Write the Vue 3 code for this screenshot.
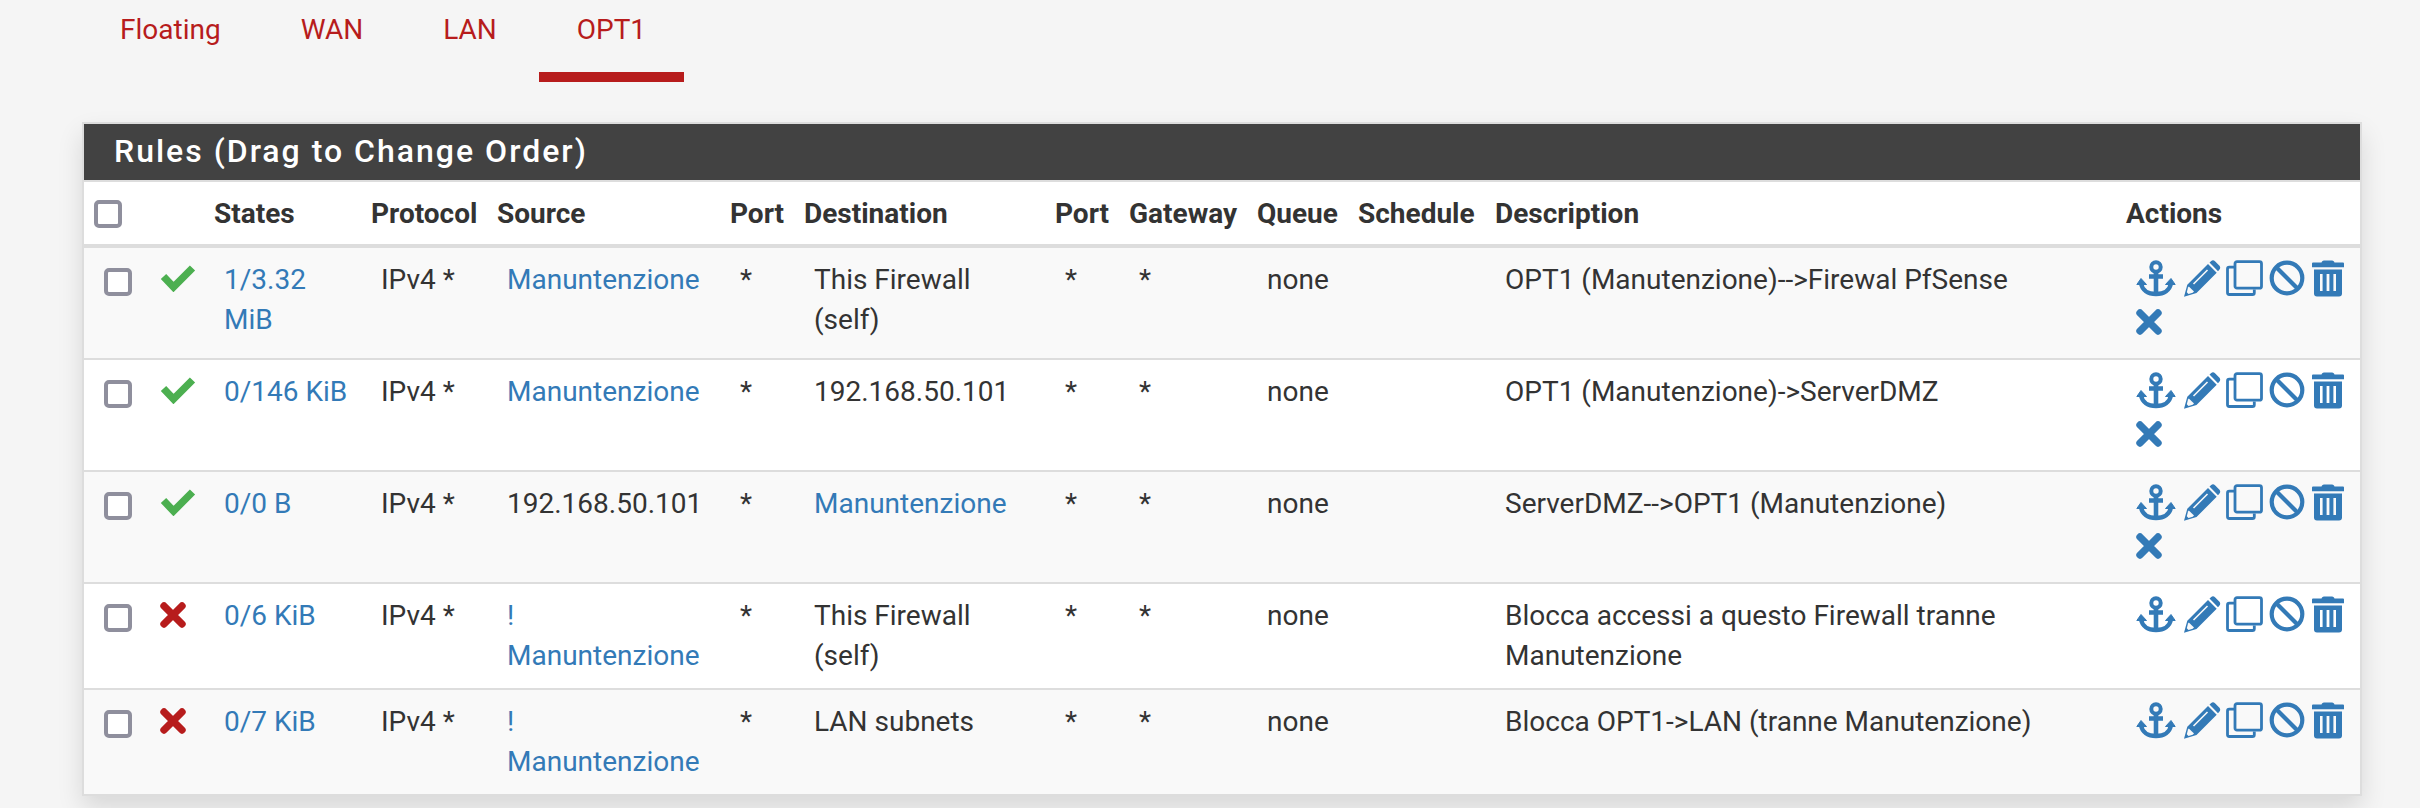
<script setup>
const tabs = ['Floating', 'WAN', 'LAN', 'OPT1']
const headers = ['States', 'Protocol', 'Source', 'Port', 'Destination', 'Port', 'Gateway', 'Queue', 'Schedule', 'Description', 'Actions']
const rules = [
  { pass: true, states: '1/3.32 MiB', source: 'Manuntenzione', sourceLink: true, dest: 'This Firewall (self)', desc: 'OPT1 (Manutenzione)-->Firewal PfSense', separate: true },
  { pass: true, states: '0/146 KiB', source: 'Manuntenzione', sourceLink: true, dest: '192.168.50.101', desc: 'OPT1 (Manutenzione)->ServerDMZ', separate: true },
  { pass: true, states: '0/0 B', source: '192.168.50.101', dest: 'Manuntenzione', destLink: true, desc: 'ServerDMZ-->OPT1 (Manutenzione)', separate: true },
  { pass: false, states: '0/6 KiB', source: '! Manuntenzione', sourceLink: true, dest: 'This Firewall (self)', desc: 'Blocca accessi a questo Firewall tranne Manutenzione' },
  { pass: false, states: '0/7 KiB', source: '! Manuntenzione', sourceLink: true, dest: 'LAN subnets', desc: 'Blocca OPT1->LAN (tranne Manutenzione)' },
]
</script>

<template>
  <main class="page">
    <nav class="tabs">
      <a v-for="t in tabs" :key="t" class="tab" :class="{ active: t === 'OPT1' }">{{ t }}</a>
    </nav>
    <section class="panel">
      <h2 class="title">Rules (Drag to Change Order)</h2>
      <table>
        <colgroup>
          <col class="c-box" /><col class="c-icon" /><col class="c-states" /><col class="c-proto" /><col class="c-source" />
          <col class="c-port" /><col class="c-dest" /><col class="c-port2" /><col class="c-gw" /><col class="c-queue" />
          <col class="c-sched" /><col class="c-desc" /><col class="c-act" />
        </colgroup>
        <thead>
          <tr>
            <th><span class="box"></span></th>
            <th></th>
            <th v-for="(h, i) in headers" :key="i">{{ h }}</th>
          </tr>
        </thead>
        <tbody>
          <tr v-for="(r, i) in rules" :key="i" :class="{ tall: r.separate }">
            <td><span class="box"></span></td>
            <td class="status">
              <svg v-if="r.pass" class="check" width="36" height="28" viewBox="0 0 36 28"><path d="M3.500 12.500 13.500 23 32.500 4" fill="none" stroke="#4caf50" stroke-width="7.4" stroke-linejoin="miter" stroke-linecap="butt" /></svg>
              <svg v-else class="cross" width="26" height="26" viewBox="0 0 26 26"><path d="M4 4 22 22M22 4 4 22" stroke="#b71c1c" stroke-width="7.4" stroke-linecap="round" /></svg>
            </td>
            <td><a>{{ r.states }}</a></td>
            <td>IPv4 *</td>
            <td><a v-if="r.sourceLink">{{ r.source }}</a><template v-else>{{ r.source }}</template></td>
            <td>*</td>
            <td><a v-if="r.destLink">{{ r.dest }}</a><template v-else>{{ r.dest }}</template></td>
            <td>*</td>
            <td>*</td>
            <td>none</td>
            <td></td>
            <td>{{ r.desc }}</td>
            <td class="actions-cell">
              <div class="actions">
                <svg class="anchor" width="40" height="38" viewBox="0 0 40 38">
                  <g fill="none" stroke="#337ab7" stroke-width="4">
                    <circle cx="20" cy="7" r="4.7" />
                    <path d="M20 11V34M13 16.500H27" stroke-width="4.6" />
                    <path d="M5 23C6 30 12 34 20 34S34 30 35 23" stroke-width="4.4" />
                  </g>
                  <path d="M.8 24.500 5 18.500 10.500 24.500ZM29.500 24.500 35 18.500 39.200 24.500Z" fill="#337ab7" stroke="#337ab7" stroke-linejoin="round" />
                </svg>
                <svg class="pencil" width="38" height="38" viewBox="0 0 38 38">
                  <path fill="#337ab7" d="M26.500 2.500 28 1.200Q30-.5 32 1.200L36.500 5.800Q38 7.700 36.300 9.800L35 11.300ZM25 4 33.700 12.800 13.500 33 1 36.800 4.300 24.700Z" />
                  <path d="M10.500 24 24.500 10" stroke="#f9f9f9" stroke-width="1.6" />
                  <path d="M5.800 26.500 11 31.500 9.700 32.800 5.500 34 3.800 32.200 5 27.500Z" fill="#f9f9f9" />
                </svg>
                <svg class="clone" width="37" height="36" viewBox="0 0 37 36">
                  <g fill="none" stroke="#337ab7" stroke-width="2.8">
                    <rect x="9" y="1.700" width="26.500" height="26.500" rx="2" />
                    <path d="M8 7.200H3.300Q1.500 7.200 1.500 9V32.500Q1.500 34.500 3.300 34.500H26.500Q28.300 34.500 28.300 32.700V29.500" />
                  </g>
                </svg>
                <svg class="ban" width="36" height="36" viewBox="0 0 36 36"><g fill="none" stroke="#337ab7" stroke-width="4.2"><circle cx="18" cy="18" r="15.3" /><path d="M7 7 29 29" /></g></svg>
                <svg class="trash" width="32" height="37" viewBox="0 0 32 37">
                  <path fill="#337ab7" fill-rule="evenodd" d="M10 1.500Q11 .5 12 .5H20Q21 .5 22 1.500L22.500 2.500H31Q32 2.500 32 3.500V7.200H0V3.500Q0 2.500 1 2.500H9.500ZM2 9.500H30V33.500Q30 36.500 27 36.500H5Q2 36.500 2 33.500ZM8 14V31H10.600V14ZM14.600 14V31H17.400V14ZM21.400 14V31H24V14Z" />
                </svg>
                <svg v-if="r.separate" class="remove" width="26" height="26" viewBox="0 0 26 26"><path d="M4 4 22 22M22 4 4 22" stroke="#337ab7" stroke-width="7.4" stroke-linecap="round" /></svg>
              </div>
            </td>
          </tr>
        </tbody>
      </table>
    </section>
  </main>
</template>

<style>
body { margin: 0; background: #f5f5f5; }
</style>

<style scoped>
.page { box-sizing: border-box; height: 808px; overflow: hidden; padding: 0 58px 0 82px; font: 28px/40px Roboto, sans-serif; color: #333; }
.tabs { display: flex; gap: 4px; height: 82px; margin-bottom: 40px; }
.tab { box-sizing: border-box; padding: 10px 38px 0; color: #b71c1c; }
.active { border-bottom: 10px solid #b71c1c; }
.panel { box-sizing: border-box; width: 2280px; height: 674px; border: 2px solid #ddd; background: #fff; box-shadow: 0 12px 24px rgba(0, 0, 0, .12); }
.title { box-sizing: border-box; height: 58px; margin: 0; padding: 7px 30px 0; border-bottom: 2px solid #ddd; background: #424242; color: #fff; font-size: 32px; line-height: 40px; font-weight: 500; letter-spacing: 2px; white-space: nowrap; }
table { width: 2276px; table-layout: fixed; border-collapse: separate; border-spacing: 0; }
.c-box { width: 66px; }
.c-icon { width: 54px; }
.c-states { width: 157px; }
.c-proto { width: 126px; }
.c-source { width: 233px; }
.c-port { width: 74px; }
.c-dest { width: 251px; }
.c-port2 { width: 74px; }
.c-gw { width: 128px; }
.c-queue { width: 101px; }
.c-sched { width: 137px; }
.c-desc { width: 631px; }
.c-act { width: 244px; }
th { box-sizing: border-box; height: 66px; padding: 12px 0 0 10px; border-bottom: 4px solid #ddd; font-weight: 700; text-align: left; vertical-align: top; white-space: nowrap; }
td { box-sizing: border-box; height: 106px; padding: 12px 10px 12px 20px; border-bottom: 2px solid #ddd; vertical-align: top; }
.tall td { height: 112px; }
tbody tr:nth-child(odd) { background: #f9f9f9; }
tbody tr:last-child td { border-bottom: 0; height: 104px; }
td a { color: #337ab7; }
.box { display: block; box-sizing: border-box; width: 28px; height: 28px; margin-top: 6px; border: 4px solid #8f8f9d; border-radius: 5px; background: #fff; }
td .box { margin-top: 8px; }
svg { display: block; flex: none; }
td.status { padding: 16px 0 0 10px; }
.cross { margin-top: 2px; }
td.actions-cell { padding: 12px 0 0 20px; }
.actions { display: flex; flex-wrap: wrap; align-items: flex-start; width: 220px; }
.pencil { margin-left: 7px; }
.clone { margin-left: 5px; }
.ban { margin-left: 6px; }
.trash { margin-left: 7px; }
.remove { margin-top: 11px; }
</style>
